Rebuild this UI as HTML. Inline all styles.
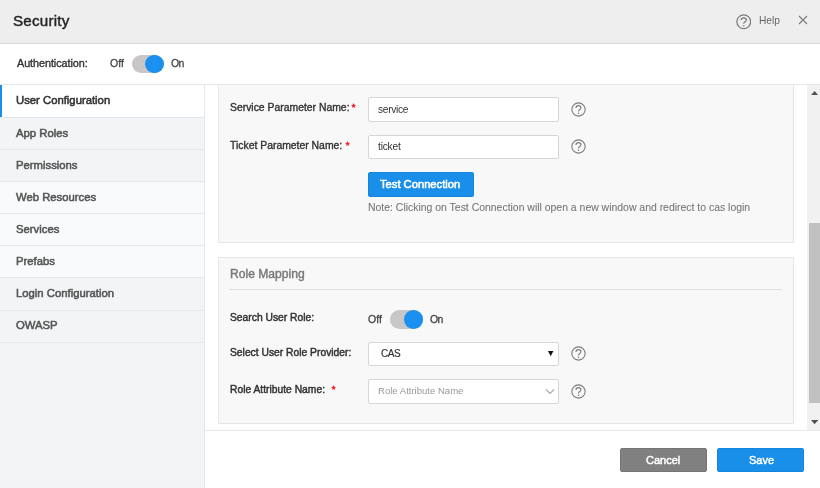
<!DOCTYPE html>
<html><head><meta charset="utf-8">
<style>
*{box-sizing:border-box;margin:0;padding:0}
html,body{width:820px;height:488px;overflow:hidden;background:#fff;font-family:"Liberation Sans",sans-serif}
.t{position:absolute;white-space:nowrap;will-change:transform}
.r{position:absolute}
</style></head><body>
<div class="r" style="left:0px;top:0px;width:820px;height:43px;background:#eeeeee;"></div>
<div class="r" style="left:0px;top:43px;width:820px;height:1px;background:#dadada;"></div>
<div class="t" style="left:12.6px;top:12.63px;font-size:15.2px;line-height:15.2px;color:#222;-webkit-text-stroke:0.396px #222;letter-spacing:0.2px;">Security</div>
<svg class="r" style="left:735.55px;top:14.05px" width="15.5" height="15.5" viewBox="0 0 16 16"><circle cx="8" cy="8" r="7.1" fill="none" stroke="#7a7a7a" stroke-width="1.25"/><path d="M5.3 6.3C5.3 4.7 6.5 3.9 7.9 3.9C9.4 3.9 10.6 4.8 10.6 6.1C10.6 7.3 9.8 7.8 9.0 8.3C8.3 8.8 8.0 9.2 8.0 10.1" fill="none" stroke="#7a7a7a" stroke-width="1.25"/><circle cx="8" cy="12.1" r=".8" fill="#7a7a7a"/></svg>
<div class="t" style="left:759.3px;top:15.67px;font-size:10.2px;line-height:10.2px;color:#666;">Help</div>
<svg class="r" style="left:798px;top:15px" width="10" height="10" viewBox="0 0 10 10"><path d="M1 1L9 9M9 1L1 9" stroke="#7a7a7a" stroke-width="1.1"/></svg>
<div class="r" style="left:0px;top:84px;width:820px;height:1px;background:#e3e8ec;"></div>
<div class="t" style="left:17px;top:57.86px;font-size:10.8px;line-height:10.8px;color:#333;-webkit-text-stroke:0.360px #333;letter-spacing:-0.05px;">Authentication:</div>
<div class="t" style="left:110px;top:57.91px;font-size:10.5px;line-height:10.5px;color:#444;-webkit-text-stroke:0.270px #444;">Off</div>
<div class="r" style="left:131.5px;top:54.8px;width:32.3px;height:18.4px;border-radius:9.2px;background:#c8c6c6"></div><div class="r" style="left:145.4px;top:54.8px;width:18.4px;height:18.4px;border-radius:50%;background:#1b90ee"></div>
<div class="t" style="left:171px;top:57.91px;font-size:10.5px;line-height:10.5px;color:#444;-webkit-text-stroke:0.270px #444;letter-spacing:-0.6px;">On</div>
<div class="r" style="left:0px;top:85px;width:204px;height:403px;background:#f2f4f6;"></div>
<div class="r" style="left:204px;top:85px;width:1px;height:403px;background:#e1e7ec;"></div>
<div class="r" style="left:0px;top:85px;width:204px;height:32px;background:#ffffff;"></div>
<div class="r" style="left:0px;top:117px;width:204px;height:1px;background:#e1e7ec;"></div>
<div class="t" style="left:16px;top:95.43px;font-size:11.3px;line-height:11.3px;color:#333;-webkit-text-stroke:0.540px #333;">User Configuration</div>
<div class="r" style="left:0px;top:118px;width:204px;height:31px;background:#f2f4f6;"></div>
<div class="r" style="left:0px;top:149px;width:204px;height:1px;background:#e1e7ec;"></div>
<div class="t" style="left:16px;top:127.53px;font-size:11.3px;line-height:11.3px;color:#555;-webkit-text-stroke:0.540px #555;">App Roles</div>
<div class="r" style="left:0px;top:150px;width:204px;height:31px;background:#f2f4f6;"></div>
<div class="r" style="left:0px;top:181px;width:204px;height:1px;background:#e1e7ec;"></div>
<div class="t" style="left:16px;top:159.73px;font-size:11.3px;line-height:11.3px;color:#555;-webkit-text-stroke:0.540px #555;">Permissions</div>
<div class="r" style="left:0px;top:182px;width:204px;height:31px;background:#f8fafc;"></div>
<div class="r" style="left:0px;top:213px;width:204px;height:1px;background:#e1e7ec;"></div>
<div class="t" style="left:16px;top:191.83px;font-size:11.3px;line-height:11.3px;color:#555;-webkit-text-stroke:0.540px #555;">Web Resources</div>
<div class="r" style="left:0px;top:214px;width:204px;height:31px;background:#f8fafc;"></div>
<div class="r" style="left:0px;top:245px;width:204px;height:1px;background:#e1e7ec;"></div>
<div class="t" style="left:16px;top:224.03px;font-size:11.3px;line-height:11.3px;color:#555;-webkit-text-stroke:0.540px #555;">Services</div>
<div class="r" style="left:0px;top:246px;width:204px;height:31px;background:#f8fafc;"></div>
<div class="r" style="left:0px;top:277px;width:204px;height:1px;background:#e1e7ec;"></div>
<div class="t" style="left:16px;top:256.13px;font-size:11.3px;line-height:11.3px;color:#555;-webkit-text-stroke:0.540px #555;">Prefabs</div>
<div class="r" style="left:0px;top:278px;width:204px;height:32px;background:#f2f4f6;"></div>
<div class="r" style="left:0px;top:310px;width:204px;height:1px;background:#e1e7ec;"></div>
<div class="t" style="left:16px;top:288.23px;font-size:11.3px;line-height:11.3px;color:#555;-webkit-text-stroke:0.540px #555;">Login Configuration</div>
<div class="r" style="left:0px;top:311px;width:204px;height:31px;background:#f2f4f6;"></div>
<div class="r" style="left:0px;top:342px;width:204px;height:1px;background:#e1e7ec;"></div>
<div class="t" style="left:16px;top:320.43px;font-size:11.3px;line-height:11.3px;color:#555;-webkit-text-stroke:0.540px #555;">OWASP</div>
<div class="r" style="left:0px;top:85px;width:2px;height:32px;background:#1a8fe9;"></div>
<div class="r" style="left:205px;top:85px;width:615px;height:345px;background:#ffffff;"></div>
<div class="r" style="left:218px;top:85px;width:576px;height:158px;background:#f8f8f8;border:1px solid #e6e6e6;border-top:none"></div>
<div class="t" style="left:229.5px;top:103.00px;font-size:10.4px;line-height:10.4px;color:#333;-webkit-text-stroke:0.360px #333;">Service Parameter Name:</div>
<svg class="r" style="left:350.6px;top:103px" width="5.2" height="5" viewBox="0 0 5.2 5"><path d="M2.60,0.10 L3.33,1.79 L5.17,1.97 L3.79,3.19 L4.19,4.98 L2.60,4.05 L1.01,4.98 L1.41,3.19 L0.03,1.97 L1.87,1.79Z" fill="#f5282e"/></svg>
<div class="r" style="left:368px;top:97px;width:191px;height:25px;background:#fff;border:1px solid #d6d6d6;border-radius:2px"></div>
<div class="t" style="left:377.5px;top:104.57px;font-size:10.2px;line-height:10.2px;color:#333;letter-spacing:-0.3px;">service</div>
<svg class="r" style="left:570.60px;top:101.90px" width="15" height="15" viewBox="0 0 16 16"><circle cx="8" cy="8" r="7.1" fill="none" stroke="#7a7a7a" stroke-width="1.15"/><path d="M5.3 6.3C5.3 4.7 6.5 3.9 7.9 3.9C9.4 3.9 10.6 4.8 10.6 6.1C10.6 7.3 9.8 7.8 9.0 8.3C8.3 8.8 8.0 9.2 8.0 10.1" fill="none" stroke="#7a7a7a" stroke-width="1.15"/><circle cx="8" cy="12.1" r=".8" fill="#7a7a7a"/></svg>
<div class="t" style="left:229.5px;top:140.70px;font-size:10.4px;line-height:10.4px;color:#333;-webkit-text-stroke:0.360px #333;">Ticket Parameter Name:</div>
<svg class="r" style="left:344.9px;top:140.6px" width="5.2" height="5" viewBox="0 0 5.2 5"><path d="M2.60,0.10 L3.33,1.79 L5.17,1.97 L3.79,3.19 L4.19,4.98 L2.60,4.05 L1.01,4.98 L1.41,3.19 L0.03,1.97 L1.87,1.79Z" fill="#f5282e"/></svg>
<div class="r" style="left:368px;top:135px;width:191px;height:24px;background:#fff;border:1px solid #d6d6d6;border-radius:2px"></div>
<div class="t" style="left:377.5px;top:142.27px;font-size:10.2px;line-height:10.2px;color:#333;letter-spacing:-0.2px;">ticket</div>
<svg class="r" style="left:570.60px;top:139.40px" width="15" height="15" viewBox="0 0 16 16"><circle cx="8" cy="8" r="7.1" fill="none" stroke="#7a7a7a" stroke-width="1.15"/><path d="M5.3 6.3C5.3 4.7 6.5 3.9 7.9 3.9C9.4 3.9 10.6 4.8 10.6 6.1C10.6 7.3 9.8 7.8 9.0 8.3C8.3 8.8 8.0 9.2 8.0 10.1" fill="none" stroke="#7a7a7a" stroke-width="1.15"/><circle cx="8" cy="12.1" r=".8" fill="#7a7a7a"/></svg>
<div class="r" style="left:368px;top:172px;width:106px;height:24.6px;background:#1a8fe9;border:1px solid #1585e0;border-radius:2px"></div>
<div class="t" style="left:379.6px;top:178.82px;font-size:11.2px;line-height:11.2px;color:#fff;-webkit-text-stroke:0.540px #fff;">Test Connection</div>
<div class="t" style="left:368px;top:203.35px;font-size:10.45px;line-height:10.45px;color:#777;-webkit-text-stroke:0.090px #777;">Note: Clicking on Test Connection will open a new window and redirect to cas login</div>
<div class="r" style="left:218px;top:257px;width:576px;height:167px;background:#f8f8f8;border:1px solid #e6e6e6"></div>
<div class="t" style="left:229.5px;top:268.36px;font-size:12.1px;line-height:12.1px;color:#7a7a7a;-webkit-text-stroke:0.450px #7a7a7a;">Role Mapping</div>
<div class="r" style="left:229px;top:289px;width:553px;height:1px;background:#dedede;"></div>
<div class="t" style="left:229.5px;top:313.08px;font-size:10.3px;line-height:10.3px;color:#333;-webkit-text-stroke:0.450px #333;">Search User Role:</div>
<div class="t" style="left:368px;top:313.71px;font-size:10.5px;line-height:10.5px;color:#444;-webkit-text-stroke:0.270px #444;">Off</div>
<div class="r" style="left:390px;top:310.3px;width:33px;height:18.6px;border-radius:9.3px;background:#c8c6c6"></div><div class="r" style="left:404.4px;top:310.3px;width:18.6px;height:18.6px;border-radius:50%;background:#1b90ee"></div>
<div class="t" style="left:429.5px;top:313.71px;font-size:10.5px;line-height:10.5px;color:#444;-webkit-text-stroke:0.270px #444;letter-spacing:-0.6px;">On</div>
<div class="t" style="left:229.5px;top:348.08px;font-size:10.3px;line-height:10.3px;color:#333;-webkit-text-stroke:0.450px #333;">Select User Role Provider:</div>
<div class="r" style="left:368px;top:342px;width:191px;height:24px;background:#fff;border:1px solid #d6d6d6;border-radius:2px"></div>
<div class="t" style="left:381px;top:348.54px;font-size:10px;line-height:10px;color:#333;-webkit-text-stroke:0.180px #333;letter-spacing:-0.5px;">CAS</div>
<svg class="r" style="left:548.2px;top:351.2px" width="5.4" height="5.2" viewBox="0 0 5.4 5.2"><path d="M0 0H5.4L2.7 5.2Z" fill="#111"/></svg>
<svg class="r" style="left:570.60px;top:346.30px" width="15" height="15" viewBox="0 0 16 16"><circle cx="8" cy="8" r="7.1" fill="none" stroke="#7a7a7a" stroke-width="1.15"/><path d="M5.3 6.3C5.3 4.7 6.5 3.9 7.9 3.9C9.4 3.9 10.6 4.8 10.6 6.1C10.6 7.3 9.8 7.8 9.0 8.3C8.3 8.8 8.0 9.2 8.0 10.1" fill="none" stroke="#7a7a7a" stroke-width="1.15"/><circle cx="8" cy="12.1" r=".8" fill="#7a7a7a"/></svg>
<div class="t" style="left:229.5px;top:384.88px;font-size:10.3px;line-height:10.3px;color:#333;-webkit-text-stroke:0.450px #333;">Role Attribute Name:</div>
<svg class="r" style="left:331.1px;top:384.8px" width="5.2" height="5" viewBox="0 0 5.2 5"><path d="M2.60,0.10 L3.33,1.79 L5.17,1.97 L3.79,3.19 L4.19,4.98 L2.60,4.05 L1.01,4.98 L1.41,3.19 L0.03,1.97 L1.87,1.79Z" fill="#f5282e"/></svg>
<div class="r" style="left:368px;top:379px;width:191px;height:25px;background:#fff;border:1px solid #d6d6d6;border-radius:2px"></div>
<div class="t" style="left:377.8px;top:385.92px;font-size:9.55px;line-height:9.55px;color:#999;">Role Attribute Name</div>
<svg class="r" style="left:545px;top:388px" width="10" height="7" viewBox="0 0 10 7"><path d="M1 1.5l4 4 4-4" fill="none" stroke="#aaa" stroke-width="1.1"/></svg>
<svg class="r" style="left:570.60px;top:383.80px" width="15" height="15" viewBox="0 0 16 16"><circle cx="8" cy="8" r="7.1" fill="none" stroke="#7a7a7a" stroke-width="1.15"/><path d="M5.3 6.3C5.3 4.7 6.5 3.9 7.9 3.9C9.4 3.9 10.6 4.8 10.6 6.1C10.6 7.3 9.8 7.8 9.0 8.3C8.3 8.8 8.0 9.2 8.0 10.1" fill="none" stroke="#7a7a7a" stroke-width="1.15"/><circle cx="8" cy="12.1" r=".8" fill="#7a7a7a"/></svg>
<div class="r" style="left:807px;top:85px;width:13px;height:345px;background:#f1f1f1;"></div>
<div class="r" style="left:809px;top:223px;width:11px;height:180px;background:#c1c1c1;"></div>
<svg class="r" style="left:810.7px;top:90.8px" width="7.2" height="4.2" viewBox="0 0 7.2 4.2"><path d="M0 4.2L3.6 0L7.2 4.2Z" fill="#505050"/></svg>
<svg class="r" style="left:810.7px;top:419.7px" width="7.2" height="4.2" viewBox="0 0 7.2 4.2"><path d="M0 0L3.6 4.2L7.2 0Z" fill="#505050"/></svg>
<div class="r" style="left:205px;top:430px;width:615px;height:1px;background:#e3e8ec;"></div>
<div class="r" style="left:620px;top:448px;width:87px;height:24px;background:#808080;border:1px solid #747474;border-radius:2px"></div>
<div class="t" style="left:645.5px;top:454.89px;font-size:11px;line-height:11px;color:#fff;-webkit-text-stroke:0.450px #fff;">Cancel</div>
<div class="r" style="left:717px;top:448px;width:87px;height:24px;background:#1a8fe9;border:1px solid #1585e0;border-radius:2px"></div>
<div class="t" style="left:748.5px;top:454.89px;font-size:11px;line-height:11px;color:#fff;-webkit-text-stroke:0.450px #fff;">Save</div>
</body></html>
